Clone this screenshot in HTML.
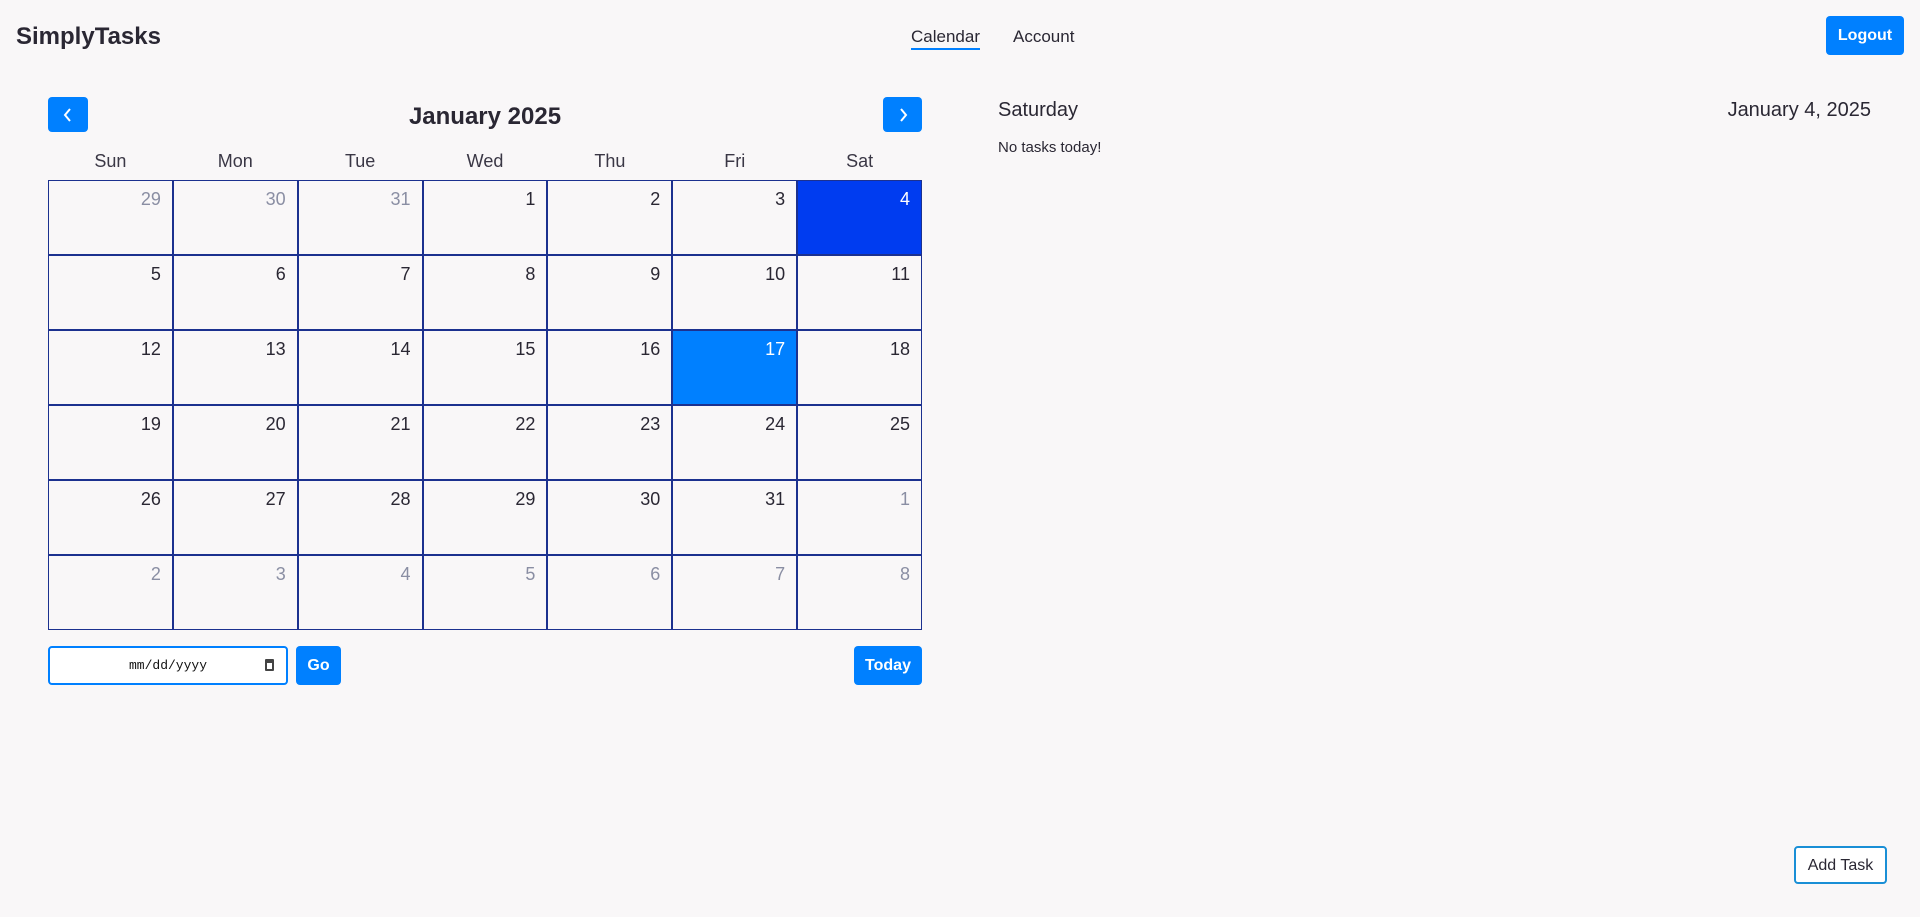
<!DOCTYPE html>
<html><head><meta charset="utf-8"><style>
*{box-sizing:border-box;margin:0;padding:0}
body{width:1920px;height:917px;background:#f9f7f8;font-family:"Liberation Sans",sans-serif;color:#2a2733;position:relative;overflow:hidden}
.abs{position:absolute}
.logo{left:16px;top:23px;font-size:24px;font-weight:bold;color:#2a2733}
.nav{top:27px;font-size:17px;color:#2a2733}
.btn{background:#0080ff;color:#fff;border-radius:4px;font-weight:bold;display:flex;align-items:center;justify-content:center;font-size:16px}
.grid{left:48px;top:180px;width:874px;height:450px;display:grid;grid-template-columns:repeat(7,1fr);grid-template-rows:repeat(6,1fr)}
.c{border:1px solid #1c318f;text-align:right;padding:8px 11px 0 0;font-size:18px;color:#2a2733}
.m{color:#8a8ea3}
.sel{background:#003cf0;color:#fff}
.td{background:#0080ff;color:#fff}
.wd{top:151px;left:48px;width:874px;display:flex;font-size:18px;color:#3a3745}
.wd div{flex:1;text-align:center}
</style></head><body>
<div class="abs logo">SimplyTasks</div>
<div class="abs nav" style="left:911px;border-bottom:2px solid #0080ff;padding-bottom:1px">Calendar</div>
<div class="abs nav" style="left:1013px">Account</div>
<div class="abs btn" style="left:1826px;top:16px;width:78px;height:39px">Logout</div>

<div class="abs btn" style="left:48px;top:97px;width:40px;height:35px"><svg width="12" height="16" viewBox="0 0 12 16"><path d="M8 2L3 8l5 6" stroke="#fff" stroke-width="2" fill="none"/></svg></div>
<div class="abs btn" style="left:883px;top:97px;width:39px;height:35px"><svg width="12" height="16" viewBox="0 0 12 16"><path d="M4 2l5 6-5 6" stroke="#fff" stroke-width="2" fill="none"/></svg></div>
<div class="abs" style="left:48px;width:874px;top:103px;text-align:center;font-size:24px;font-weight:bold">January 2025</div>
<div class="abs wd"><div>Sun</div><div>Mon</div><div>Tue</div><div>Wed</div><div>Thu</div><div>Fri</div><div>Sat</div></div>
<div class="abs grid">
<div class="c m">29</div><div class="c m">30</div><div class="c m">31</div><div class="c">1</div><div class="c">2</div><div class="c">3</div><div class="c sel">4</div>
<div class="c">5</div><div class="c">6</div><div class="c">7</div><div class="c">8</div><div class="c">9</div><div class="c">10</div><div class="c">11</div>
<div class="c">12</div><div class="c">13</div><div class="c">14</div><div class="c">15</div><div class="c">16</div><div class="c td">17</div><div class="c">18</div>
<div class="c">19</div><div class="c">20</div><div class="c">21</div><div class="c">22</div><div class="c">23</div><div class="c">24</div><div class="c">25</div>
<div class="c">26</div><div class="c">27</div><div class="c">28</div><div class="c">29</div><div class="c">30</div><div class="c">31</div><div class="c m">1</div>
<div class="c m">2</div><div class="c m">3</div><div class="c m">4</div><div class="c m">5</div><div class="c m">6</div><div class="c m">7</div><div class="c m">8</div>
</div>
<div class="abs" style="left:48px;top:646px;width:240px;height:39px;border:2px solid #0080ff;border-radius:4px;background:#fff;font-family:'Liberation Mono',monospace;font-size:13px;display:flex;align-items:center;justify-content:center;color:#111">mm/dd/yyyy<span style="position:absolute;right:12px;top:11px;width:9px;height:12px;border:2px solid #444;border-top-width:4px;border-radius:1px"></span></div>
<div class="abs btn" style="left:296px;top:646px;width:45px;height:39px">Go</div>
<div class="abs btn" style="left:854px;top:646px;width:68px;height:39px">Today</div>

<div class="abs" style="left:998px;top:99px;font-size:20px">Saturday</div>
<div class="abs" style="right:49px;top:99px;font-size:20px">January 4, 2025</div>
<div class="abs" style="left:998px;top:139px;font-size:15px">No tasks today!</div>
<div class="abs" style="left:1794px;top:846px;width:93px;height:38px;border:2px solid #1a8fd6;border-radius:4px;background:#fff;display:flex;align-items:center;justify-content:center;font-size:16px;padding-top:2px">Add Task</div>
</body></html>
